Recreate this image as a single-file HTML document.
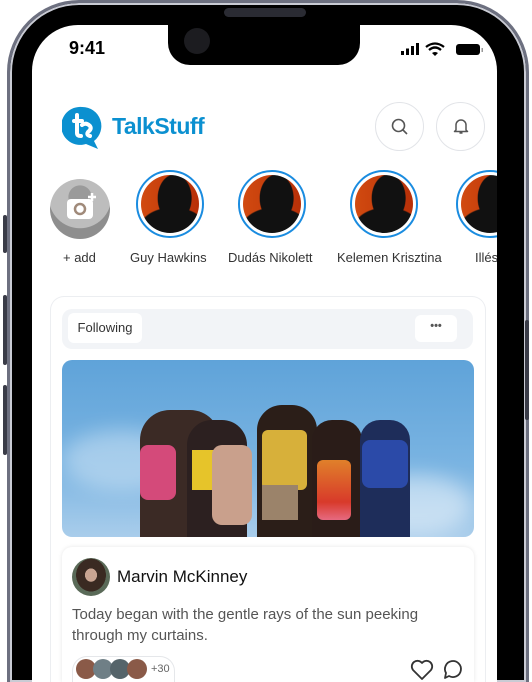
<!DOCTYPE html>
<html><head><meta charset="utf-8"><style>
*{margin:0;padding:0;box-sizing:border-box}
html{width:532px;height:682px;overflow:hidden}
body{width:532px;height:682px;overflow:hidden;background:#fff;position:relative;font-family:"Liberation Sans",sans-serif}
.shell{position:absolute;left:7px;top:0;width:522px;height:682px;border-radius:72px 72px 0 0;background:#000;border:3px solid #6d7080;border-bottom:none;box-shadow:inset 0 0 0 2px #c9cbd4}
.screen{position:absolute;left:32px;top:25px;width:465px;height:657px;border-radius:46px 46px 0 0;background:#fff;overflow:hidden}
.notch{position:absolute;left:168px;top:25px;width:192px;height:40px;background:#000;border-radius:0 0 22px 22px}
.abs{position:absolute}
.btn{position:absolute;width:4px;background:#3a3c48;border-radius:2px}
.av{width:100%;height:100%;border-radius:50%;background:radial-gradient(ellipse 30% 42% at 58% 40%,#111 0 95%,transparent 100%),radial-gradient(ellipse 60% 40% at 55% 95%,#111 0 95%,transparent 100%),linear-gradient(90deg,#d14a10,#b83008)}
</style></head><body>
<div class="shell"></div>
<div class="btn" style="left:3px;top:215px;height:38px"></div>
<div class="btn" style="left:3px;top:295px;height:70px"></div>
<div class="btn" style="left:3px;top:385px;height:70px"></div>
<div class="btn" style="left:525px;top:320px;height:100px"></div>
<div class="abs" style="left:224px;top:8px;width:82px;height:9px;border-radius:5px;background:#2a2b33"></div>
<div class="screen">
  <div class="abs" style="left:37px;top:13px;font-size:18px;font-weight:bold;color:#000">9:41</div>
  <svg class="abs" style="left:367px;top:16px" width="90" height="16" viewBox="0 0 90 16">
    <rect x="2" y="10" width="3" height="4" fill="#000"/><rect x="7" y="7.5" width="3" height="6.5" fill="#000"/><rect x="12" y="5" width="3" height="9" fill="#000"/><rect x="17" y="2" width="3" height="12" fill="#000"/>
    <path d="M27 6 Q36 -1 45 6 M30 9 Q36 4 42 9" stroke="#000" stroke-width="2.3" fill="none"/><path d="M33 12 L36 15 L39 12 Q36 10 33 12Z" fill="#000"/>
    <rect x="57" y="3" width="24" height="11" rx="3" fill="#000"/><rect x="82.5" y="7" width="1.5" height="4" fill="#999"/>
  </svg>
  <svg class="abs" style="left:30px;top:80px" width="44" height="46" viewBox="0 0 44 46">
    <path d="M20 2 A19 19 0 1 0 24 39 L36 44 L32 36 A19 19 0 0 0 20 2Z" fill="#0b90d0"/>
    <path d="M15 10 V28 Q15 31 19 31 M12 16 H20 M20 20 Q24 17 28 21 Q30 24 26 27 Q24 30 28 31" stroke="#fff" stroke-width="4" fill="none" stroke-linecap="round"/>
  </svg>
  <div class="abs" style="left:80px;top:88px;font-size:23px;font-weight:bold;color:#0b90d0;letter-spacing:-0.5px">TalkStuff</div>
  <div class="abs" style="left:343px;top:77px;width:49px;height:49px;border-radius:50%;border:1px solid #e2e4e8"></div>
  <svg class="abs" style="left:358px;top:92px" width="20" height="20" viewBox="0 0 20 20"><circle cx="8.5" cy="8.5" r="6" stroke="#555" stroke-width="1.6" fill="none"/><path d="M13 13 L17 17" stroke="#555" stroke-width="1.6"/></svg>
  <div class="abs" style="left:404px;top:77px;width:49px;height:49px;border-radius:50%;border:1px solid #e2e4e8"></div>
  <svg class="abs" style="left:419px;top:91px" width="20" height="20" viewBox="0 0 20 20"><path d="M5 14 V9 A5 5 0 0 1 15 9 V14 L16.5 15.5 H3.5Z M8.5 17 H11.5" stroke="#555" stroke-width="1.5" fill="none" stroke-linejoin="round"/></svg>
  <div class="abs" style="left:18px;top:154px;width:60px;height:60px;border-radius:50%;background:radial-gradient(circle at 50% 30%,#9a9a9a 0 22%,#bdbdbd 23% 60%,#8e8e8e 61%)"></div>
  <svg class="abs" style="left:33px;top:166px" width="32" height="32" viewBox="0 0 32 32"><rect x="2" y="8" width="26" height="20" rx="4" fill="#fff"/><circle cx="15" cy="18" r="5" fill="none" stroke="#a08a7a" stroke-width="2.5"/><path d="M27 2 V10 M23 6 H31" stroke="#fff" stroke-width="2.5"/></svg>
  <div class="abs" style="left:31px;top:225px;font-size:13px;color:#333">+ add</div>
  <div class="abs" style="left:104px;top:145px;width:68px;height:68px;border-radius:50%;border:2px solid #1a8ce0;padding:3px"><div class="av"></div></div>
  <div class="abs" style="left:98px;top:225px;font-size:13px;color:#333">Guy Hawkins</div>
  <div class="abs" style="left:206px;top:145px;width:68px;height:68px;border-radius:50%;border:2px solid #1a8ce0;padding:3px"><div class="av"></div></div>
  <div class="abs" style="left:196px;top:225px;font-size:13px;color:#333">Dudás Nikolett</div>
  <div class="abs" style="left:318px;top:145px;width:68px;height:68px;border-radius:50%;border:2px solid #1a8ce0;padding:3px"><div class="av"></div></div>
  <div class="abs" style="left:305px;top:225px;font-size:13px;color:#333">Kelemen Krisztina</div>
  <div class="abs" style="left:424px;top:145px;width:41px;height:68px;overflow:hidden"><div style="width:68px;height:68px;border-radius:50%;border:2px solid #1a8ce0;padding:3px"><div class="av"></div></div></div>
  <div class="abs" style="left:443px;top:225px;width:22px;overflow:hidden;font-size:13px;color:#333;white-space:nowrap">Illés B</div>
  <div class="abs" style="left:18px;top:271px;width:436px;height:386px;border:1px solid #eceef1;border-bottom:none;border-radius:14px 14px 0 0"></div>
  <div class="abs" style="left:30px;top:284px;width:411px;height:40px;background:#f2f4f7;border-radius:10px"></div>
  <div class="abs" style="left:36px;top:288px;width:74px;height:30px;background:#fff;border-radius:6px;font-size:13px;color:#333;line-height:30px;text-align:center">Following</div>
  <div class="abs" style="left:383px;top:290px;width:42px;height:27px;background:#fff;border-radius:6px;font-size:11px;color:#555;line-height:22px;text-align:center;font-weight:bold">•••</div>
  <div class="abs" style="left:30px;top:335px;width:412px;height:177px;border-radius:10px;overflow:hidden;background:linear-gradient(180deg,#5fa3d9,#7ab4e2 60%,#a9cdeb)">
    <div class="abs" style="left:0;top:70px;width:120px;height:60px;border-radius:50%;background:rgba(255,255,255,.35);filter:blur(10px)"></div>
    <div class="abs" style="left:300px;top:115px;width:110px;height:60px;border-radius:50%;background:rgba(255,255,255,.45);filter:blur(10px)"></div>
    <div class="abs" style="left:78px;top:50px;width:80px;height:127px;border-radius:30px 30px 0 0;background:#3b2a25"></div>
    <div class="abs" style="left:78px;top:85px;width:36px;height:55px;background:#d44a7a;border-radius:8px"></div>
    <div class="abs" style="left:125px;top:60px;width:60px;height:117px;border-radius:25px 25px 0 0;background:#2c2020"></div>
    <div class="abs" style="left:130px;top:90px;width:24px;height:40px;background:#e6c42a"></div>
    <div class="abs" style="left:150px;top:85px;width:40px;height:80px;background:#c9a08c;border-radius:10px"></div>
    <div class="abs" style="left:195px;top:45px;width:60px;height:132px;border-radius:25px 25px 0 0;background:#2b1e18"></div>
    <div class="abs" style="left:200px;top:70px;width:45px;height:60px;background:#d7b03a;border-radius:6px"></div>
    <div class="abs" style="left:200px;top:125px;width:36px;height:35px;background:#9b836a"></div>
    <div class="abs" style="left:250px;top:60px;width:50px;height:117px;border-radius:20px 20px 0 0;background:#2a1c18"></div>
    <div class="abs" style="left:255px;top:100px;width:34px;height:60px;background:linear-gradient(#e0802a,#d83a2a 70%,#e66a80);border-radius:6px"></div>
    <div class="abs" style="left:298px;top:60px;width:50px;height:117px;border-radius:20px 20px 0 0;background:#1e2d5a"></div>
    <div class="abs" style="left:300px;top:80px;width:46px;height:48px;background:#2b4aa8;border-radius:8px"></div>
  </div>
  <div class="abs" style="left:30px;top:522px;width:412px;height:135px;background:#fff;border-radius:10px 10px 0 0;box-shadow:0 0 4px rgba(0,0,0,.1)"></div>
  <div class="abs" style="left:40px;top:533px;width:38px;height:38px;border-radius:50%;background:radial-gradient(ellipse at 50% 45%,#c9a592 0 22%,#3a2a22 23% 55%,#5a6a58 56%)"></div>
  <div class="abs" style="left:85px;top:542px;font-size:17px;color:#111">Marvin McKinney</div>
  <div class="abs" style="left:40px;top:579px;font-size:15px;line-height:21px;color:#555;width:400px">Today began with the gentle rays of the sun peeking through my curtains.</div>
  <div class="abs" style="left:40px;top:631px;width:103px;height:26px;border-radius:15px 15px 0 0;border:1px solid #e5e7ea;border-bottom:none"></div>
  <div class="abs" style="left:44px;top:634px;width:20px;height:20px;border-radius:50%;background:#8a5a48"></div>
  <div class="abs" style="left:61px;top:634px;width:20px;height:20px;border-radius:50%;background:#6f7f86"></div>
  <div class="abs" style="left:78px;top:634px;width:20px;height:20px;border-radius:50%;background:#55646a"></div>
  <div class="abs" style="left:95px;top:634px;width:20px;height:20px;border-radius:50%;background:#8a5a48"></div>
  <div class="abs" style="left:119px;top:638px;font-size:11px;color:#666">+30</div>
  <svg class="abs" style="left:378px;top:634px" width="24" height="22" viewBox="0 0 24 22"><path d="M12 20 L3 11 A5 5 0 0 1 12 4 A5 5 0 0 1 21 11Z" stroke="#333" stroke-width="1.8" fill="none" stroke-linejoin="round"/></svg>
  <svg class="abs" style="left:409px;top:634px" width="22" height="22" viewBox="0 0 22 22"><path d="M4 19 L5 14 A8 8 0 1 1 8 17Z" stroke="#333" stroke-width="1.8" fill="none" stroke-linejoin="round"/></svg>
</div>
<div class="notch"></div>
<div class="abs" style="left:184px;top:28px;width:26px;height:26px;border-radius:50%;background:#1c1c20"></div>
</body></html>
